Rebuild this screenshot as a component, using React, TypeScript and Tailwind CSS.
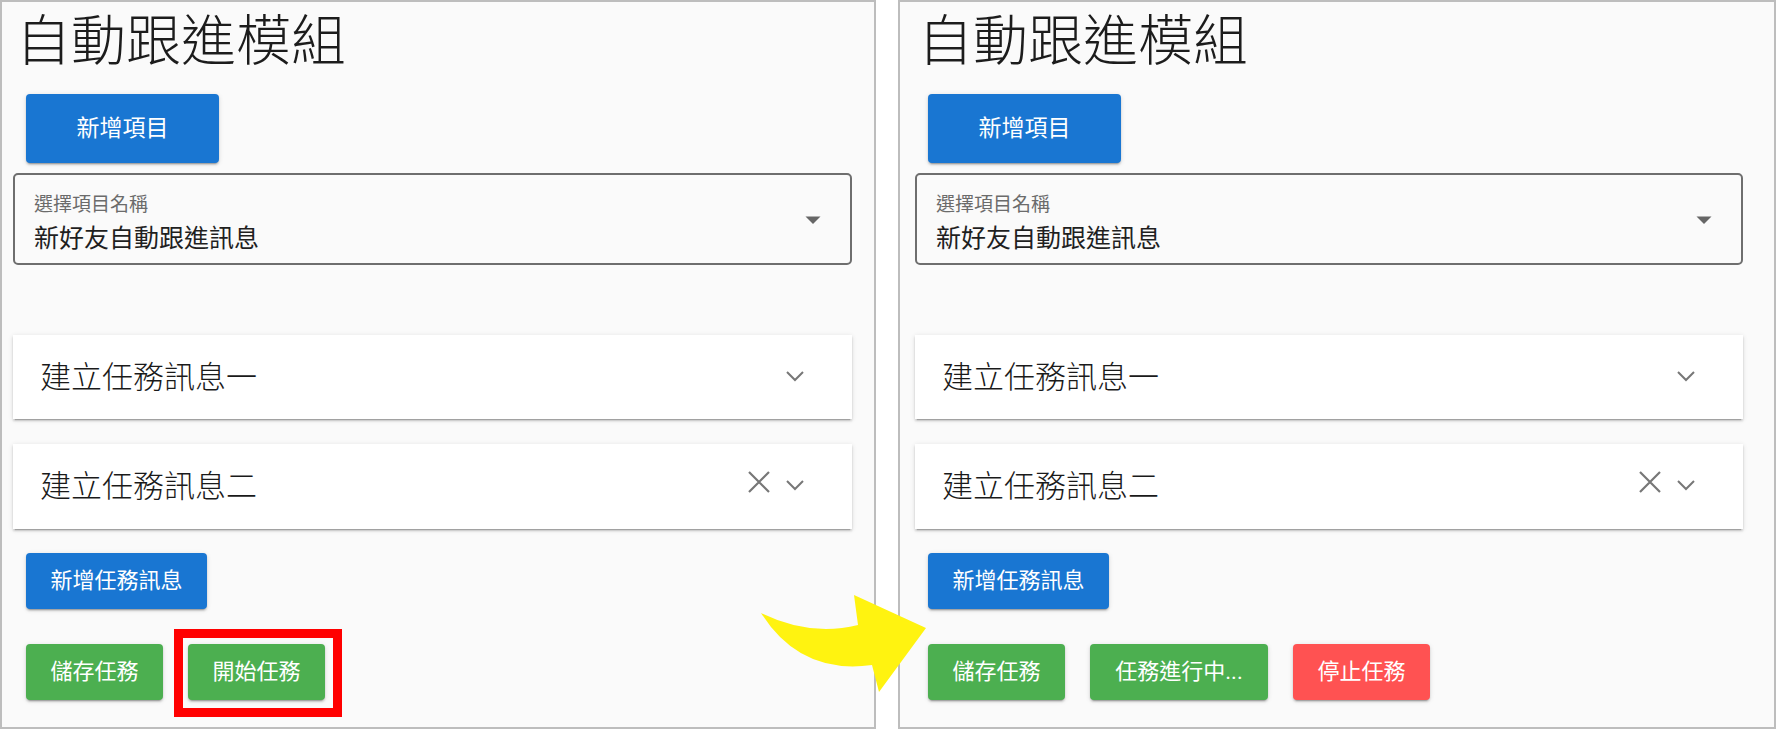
import type { ReactNode } from 'react'

const raised =
  'shadow-[0_3px_1px_-2px_rgba(0,0,0,0.2),0_2px_2px_0_rgba(0,0,0,0.14),0_1px_5px_0_rgba(0,0,0,0.12)]'

function Chevron({ className = '' }: { className?: string }) {
  return (
    <svg width="36" height="36" viewBox="0 0 36 36" fill="none" stroke="#777" strokeWidth="2" className={className}>
      <path d="M10 14l8 8 8-8" />
    </svg>
  )
}

function CloseIcon() {
  return (
    <svg width="36" height="36" viewBox="0 0 36 36" fill="none" stroke="#777" strokeWidth="2.2" className="-mt-[10px]">
      <path d="M8 8l20 20M28 8L8 28" />
    </svg>
  )
}

function Btn({ className, children }: { className: string; children: ReactNode }) {
  return (
    <button className={`flex items-center justify-center rounded-[4px] text-white leading-none ${raised} ${className}`}>
      {children}
    </button>
  )
}

function Panel({ running, pad }: { running?: boolean; pad: string }) {
  return (
    <div className={`h-[729px] border-2 border-[#bdbdbd] bg-[#fafafa] flex flex-col items-start ${pad}`}>
      <h1 className="mt-[12px] ml-[3px] text-[55px] leading-none font-light text-[#1c1c1c]">自動跟進模組</h1>

      <Btn className="ml-[13px] mt-[25px] h-[69px] w-[193px] bg-[#1976d2] text-[23px]">新增項目</Btn>

      {/* select */}
      <div className="mt-[10px] w-full h-[92px] border-2 border-[#6e6e6e] rounded-[5px] flex items-center pl-[19px] pr-[29px]">
        <div className="flex-1 self-start pt-[20px] flex flex-col">
          <span className="text-[19px] leading-none text-[#6b6b6b]">選擇項目名稱</span>
          <span className="mt-[12px] text-[25px] leading-none text-[#1f1f1f]">新好友自動跟進訊息</span>
        </div>
        <svg width="16" height="8" viewBox="0 0 16 8" className="mt-[1px]">
          <path d="M0.5 0.5h15L8 8z" fill="#666" />
        </svg>
      </div>

      {/* expansion panels */}
      <div className={`mt-[70px] w-full h-[84px] bg-white flex items-center pl-[27px] pr-[39px] ${raised}`}>
        <span className="flex-1 text-[31px] leading-none font-light text-[#1a1a1a]">建立任務訊息一</span>
        <Chevron className="-mt-[3px]" />
      </div>
      <div className={`mt-[25px] w-full h-[85px] bg-white flex items-center pl-[27px] pr-[39px] ${raised}`}>
        <span className="flex-1 text-[31px] leading-none font-light text-[#1a1a1a]">建立任務訊息二</span>
        <CloseIcon />
        <Chevron className="-mt-[3px]" />
      </div>

      <Btn className="ml-[13px] mt-[24px] h-[56px] w-[181px] bg-[#1976d2] text-[22px]">新增任務訊息</Btn>

      <div className="ml-[13px] mt-[35px] flex gap-[25px]">
        <Btn className="h-[56px] w-[137px] bg-[#4caf50] text-[22px]">儲存任務</Btn>
        {running ? (
          <>
            <Btn className="h-[56px] w-[178px] bg-[#4caf50] text-[22px]">任務進行中...</Btn>
            <Btn className="h-[56px] w-[137px] bg-[#ff5252] text-[22px]">停止任務</Btn>
          </>
        ) : (
          <div className="relative">
            <Btn className="h-[56px] w-[137px] bg-[#4caf50] text-[22px]">開始任務</Btn>
            <div className="absolute -left-[14px] -right-[17px] -top-[15px] -bottom-[17px] border-[9px] border-[#ff0000]" />
          </div>
        )}
      </div>
    </div>
  )
}

export default function App() {
  return (
    <div className="relative flex w-[1776px] h-[729px] bg-white overflow-hidden [font-family:Roboto,'Noto_Sans_CJK_TC',sans-serif]">
      <div className="w-[876px] shrink-0">
        <Panel pad="pl-[11px] pr-[22px]" />
      </div>
      <div className="w-[22px] shrink-0" />
      <div className="w-[878px] shrink-0">
        <Panel running pad="pl-[15px] pr-[31px]" />
      </div>

      {/* yellow arrow */}
      <svg width="190" height="115" viewBox="0 0 190 115" className="absolute left-[750px] top-[585px]">
        <path d="M11 28Q60 52 108 40L104 10L176 43L129 107L122 80Q50 90 11 28Z" fill="#fff310" />
      </svg>
    </div>
  )
}
